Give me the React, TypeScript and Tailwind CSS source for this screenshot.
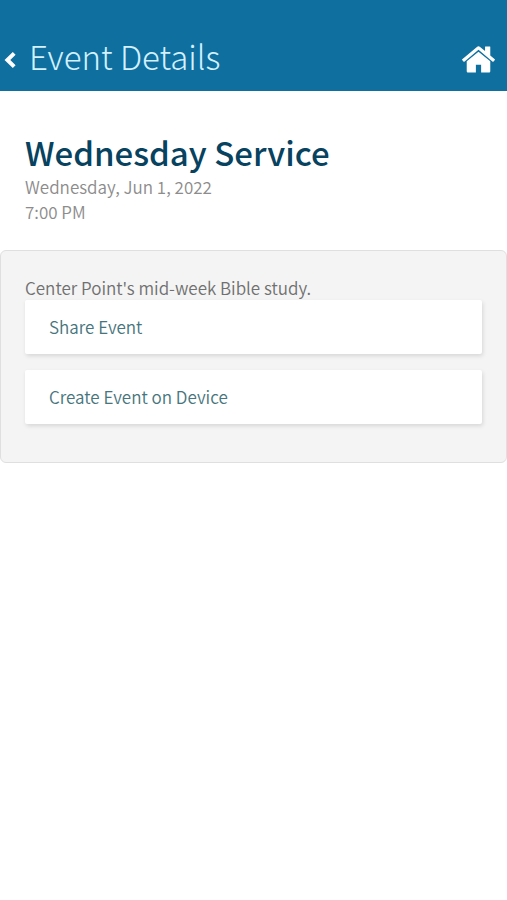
import type { ReactNode } from 'react';

const event = {
  title: 'Wednesday Service',
  date: 'Wednesday, Jun 1, 2022',
  time: '7:00 PM',
  description: "Center Point's mid-week Bible study.",
};

function BackIcon() {
  return (
    <svg viewBox="0 0 12 18" className="h-[18px] w-3" fill="none" stroke="currentColor" strokeWidth="4">
      <path d="M10.2 2.4 3.4 9l6.8 6.6" />
    </svg>
  );
}

function HomeIcon() {
  return (
    <svg viewBox="25 250 1614 1290" className="h-[27px] w-[33px]" fill="currentColor">
      <path d="M1408 992v480q0 26-19 45t-45 19h-384v-384h-256v384h-384q-26 0-45-19t-19-45v-480q0-1 .5-3t.5-3l575-474 575 474q1 2 1 6z" />
      <path d="M1631 923l-62 74q-8 9-21 11h-3q-13 0-21-7l-692-577-692 577q-12 8-24 7-13-2-21-11l-62-74q-8-10-7-23.500t11-21.500l719-599q32-26 76-26t76 26l244 204v-195q0-14 9-23t23-9h192q14 0 23 9t9 23v408l219 182q10 8 11 21.500t-7 23.500z" />
    </svg>
  );
}

function ActionButton({ children }: { children: ReactNode }) {
  return (
    <button
      type="button"
      className="block h-[54px] w-full rounded-xs bg-white px-6 pb-[2px] text-left text-[#47757d] shadow-[1px_2px_4px_rgba(0,0,0,0.12)]"
    >
      {children}
    </button>
  );
}

export default function App() {
  return (
    <div className="min-h-screen bg-white font-['Noto_Sans_CJK_JP','Noto_Sans',sans-serif] text-[17px] leading-[25px] font-[350]">
      <header className="flex items-center bg-[#0f6f9f] pt-6 pr-3 pl-1 text-white">
        <a href="#back" aria-label="Back" className="w-[25px] pt-1">
          <BackIcon />
        </a>
        <h1 className="flex-1 pb-[2px] text-[33px] leading-[65px] font-light text-[#d3f1ff]">Event Details</h1>
        <a href="#home" aria-label="Home" className="pt-1">
          <HomeIcon />
        </a>
      </header>

      <main>
        <div className="px-[25px] pt-10 pb-[26px] text-[#8c8c8c]">
          <h2 className="text-[33px] leading-[43px] font-medium text-[#07425f]">{event.title}</h2>
          <p>{event.date}</p>
          <p>{event.time}</p>
        </div>

        <section className="rounded-md border border-[#dfdfdf] bg-[#f4f4f4] px-6 pt-6 pb-[38px]">
          <p className="text-[#707070]">{event.description}</p>
          <div className="space-y-4">
            <ActionButton>Share Event</ActionButton>
            <ActionButton>Create Event on Device</ActionButton>
          </div>
        </section>
      </main>
    </div>
  );
}
